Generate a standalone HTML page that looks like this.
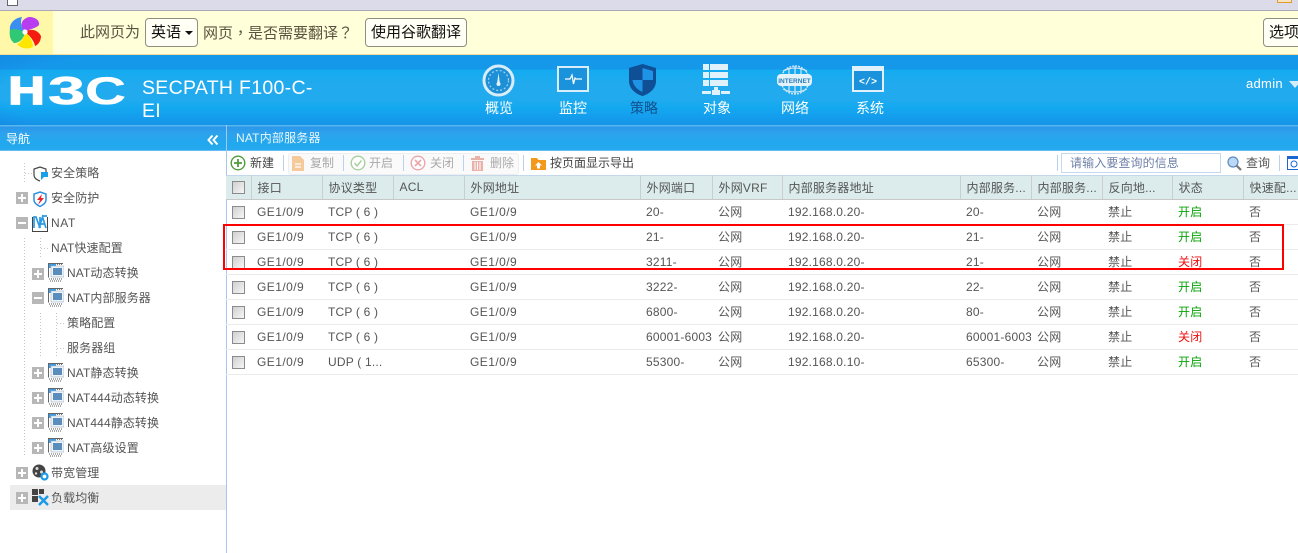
<!DOCTYPE html>
<html lang="zh">
<head>
<meta charset="utf-8">
<title>NAT内部服务器</title>
<style>
html,body{margin:0;padding:0;background:#fff}
body{width:1298px;height:553px;position:relative;overflow:hidden;font-family:"Liberation Sans","Noto Sans CJK SC",sans-serif;font-size:12px;color:#555}
.a{position:absolute;white-space:nowrap}
svg{position:absolute;display:block;overflow:visible}
.btn{position:absolute;top:18px;height:27px;border:1px solid #8f8f80;border-radius:4px;background:#fffff5;color:#111;font-size:15px;line-height:27px;text-align:center;white-space:nowrap;box-sizing:content-box}
.nav{position:absolute;top:98px;width:60px;text-align:center;color:#fff;font-size:14px;line-height:20px}
.t{position:absolute;white-space:nowrap;line-height:20px;color:#555;font-size:12px;letter-spacing:.1px}
.pm{position:absolute;width:12px;height:12px;background:#b7b7b7}
.pm:before{content:"";position:absolute;left:2px;top:5px;width:8px;height:2px;background:#fff}
.pm.p:after{content:"";position:absolute;left:5px;top:2px;width:2px;height:8px;background:#fff}
.dv{position:absolute;width:1px;background:repeating-linear-gradient(#c4c4c4 0 1px,transparent 1px 3px)}
.dh{position:absolute;height:1px;width:8px;background:repeating-linear-gradient(90deg,#c4c4c4 0 1px,transparent 1px 3px)}
table{position:absolute;left:226px;top:175px;width:1072px;border-collapse:collapse;table-layout:fixed;font-size:12px;letter-spacing:.2px}
th{height:24px;padding:0 0 1px 6px;background:#dcecec;border-top:1px solid #c3d8ea;border-bottom:1px solid #c8c8c8;border-right:1px solid #c9cfcf;font-weight:normal;text-align:left;color:#555;overflow:hidden;white-space:nowrap;box-sizing:border-box}
td{height:25px;padding:0 0 0 6px;border-bottom:1px solid #ebebeb;overflow:hidden;white-space:nowrap;color:#555;box-sizing:border-box}
td:nth-child(2),td:nth-child(5){letter-spacing:.45px}
td:nth-child(7),td:nth-child(10),td:nth-child(11),td:nth-child(12),td:nth-child(13){padding-bottom:2px}
th:first-child,td:first-child{padding:0}
th:last-child{border-right:0}
.cb{display:block;width:11px;height:11px;margin-left:6px;border:1px solid #8b8b8b;background:linear-gradient(135deg,#d0d0d0,#f6f6f6)}
.g{color:#0aa50a}.r{color:#f01010}
.bar{position:absolute;top:155px;width:1px;height:16px;background:#b9d3ee}
.dis{color:#aaa}
</style>
</head>
<body>
<!-- browser top -->
<div class="a" style="left:0;top:0;width:1298px;height:10px;background:#dcdbea;border-bottom:1px solid #a9a8b6"></div>
<div class="a" style="left:7px;top:-5px;width:9px;height:9px;border:1px solid #666;background:#fff"></div>
<div class="a" style="left:1277px;top:-4px;width:13px;height:5px;border:1px solid #e09a30;background:#f7e4c0"></div>
<!-- infobar -->
<div class="a" style="left:0;top:11px;width:1298px;height:43px;background:#ffffda;border-bottom:1px solid #f2dc9a"></div>
<div class="a" style="left:0;top:11px;width:53px;height:43px;background:#fff8a8"></div>
<svg style="left:9px;top:16px" width="33" height="33" viewBox="0 0 33 33">
<path d="M16 16C10 10 12 3 20 1C27 1 31 5 30 9C26 13 20 13 16 16Z" fill="#b83df0"/>
<path d="M16 16C22 12 29 14 32 20C32 25 29 29 26 30C25 24 20 19 16 16Z" fill="#f41c10"/>
<path d="M16 16C21 20 24 26 24 31C18 34 11 32 8 28C12 27 15 22 16 16Z" fill="#ffe600"/>
<path d="M16 16C15 22 11 27 5 27C1 24 0 19 1 13C6 11 12 13 16 16Z" fill="#2fc874"/>
<path d="M16 16C11 14 6 12 1 14C0 8 5 2 13 1C11 6 12 12 16 16Z" fill="#3b8ff0"/>
<circle cx="16" cy="16" r="2.6" fill="#fff"/>
</svg>
<div class="a" style="left:80px;top:22px;font-size:15px;line-height:22px;color:#5a5340">此网页为</div>
<div class="btn" style="left:145px;width:51px;text-align:left;text-indent:5px">英语<span class="a" style="left:39px;top:12px;width:0;height:0;border:4px solid transparent;border-top:4px solid #111;text-indent:0"></span></div>
<div class="a" lang="zh-TW" style="left:203px;top:22px;font-size:15px;line-height:22px;color:#5a5340;font-family:'Noto Sans CJK TC',sans-serif">网页，是否需要翻译？</div>
<div class="btn" style="left:365px;width:100px">使用谷歌翻译</div>
<div class="btn" style="left:1263px;width:60px;text-align:left;text-indent:5px">选项</div>
<!-- header -->
<div class="a" style="left:0;top:55px;width:1298px;height:70px;background:linear-gradient(#1597ea 0,#1597ea 14px,#13abf0 15px,#1cabef 24px,#22aaee 30px,#22aaee 44px,#13a9f0 52px,#14a0ee 60px,#1594e8 70px)"></div>
<div class="a" style="left:0;top:55px;width:130px;height:70px;background:radial-gradient(ellipse at 100% 55%,rgba(30,170,240,0) 70%,rgba(20,130,225,.55) 100%)"></div>
<svg style="left:8px;top:76px" width="118" height="29" viewBox="0 0 118 29">
<g font-family="Liberation Sans" font-weight="700" font-size="39" fill="#fff" stroke="#fff">
<text x=".5" y="28" textLength="36" lengthAdjust="spacingAndGlyphs" stroke-width="1.800">H</text>
<text x="40" y="28" textLength="37" lengthAdjust="spacingAndGlyphs" stroke-width=".6">3</text>
<text x="77" y="28" textLength="41" lengthAdjust="spacingAndGlyphs" stroke-width=".3">C</text>
</g>
</svg>
<div class="a" style="left:142px;top:77px;width:172px;font-size:19.500px;line-height:23px;color:#fff;letter-spacing:.3px">SECPATH F100-C-<br>EI</div>
<!-- nav icons -->
<svg style="left:482px;top:64px" width="33" height="33" viewBox="0 0 33 33">
<circle cx="16.500" cy="16.500" r="14.500" fill="#1c8fd6" stroke="#d8edf8" stroke-width="3"/>
<circle cx="16.500" cy="16.500" r="10" fill="none" stroke="#9fd3ee" stroke-width="1.200" stroke-dasharray="2 2"/>
<path d="M16.500 9L18 20H15Z" fill="#e4f3fb"/><circle cx="16.500" cy="20" r="2" fill="#e4f3fb"/>
</svg>
<svg style="left:557px;top:66px" width="33" height="27" viewBox="0 0 33 27">
<rect x="1" y="1" width="30" height="24" fill="#1b93dc" stroke="#d9eefa" stroke-width="2"/>
<path d="M8 13H13L15 9L16.500 18L18 12L19 13H25" fill="none" stroke="#fff" stroke-width="1.200"/>
</svg>
<svg style="left:628px;top:64px" width="29" height="33" viewBox="0 0 29 33">
<path d="M14.500 0L28 4V17C28 25 21 30 14.500 32C8 30 1 25 1 17V4Z" fill="#0e4f96"/>
<path d="M14.500 4L25 7V16H14.500Z" fill="#1f94e6"/><path d="M14.500 16H4.500C5 22 10 26 14.500 28Z" fill="#1f94e6"/>
</svg>
<svg style="left:702px;top:64px" width="29" height="32" viewBox="0 0 29 32">
<g fill="#dff1fb"><rect x="1" y="0" width="6" height="6"/><rect x="8" y="0" width="18" height="6"/><rect x="1" y="8" width="6" height="6"/><rect x="8" y="8" width="18" height="6"/><rect x="1" y="16" width="6" height="6"/><rect x="8" y="16" width="18" height="6"/><rect x="12" y="23" width="4" height="4"/><rect x="0" y="27" width="9" height="3"/><rect x="10" y="26" width="8" height="5"/><rect x="19" y="27" width="9" height="3"/></g>
</svg>
<svg style="left:777px;top:65px" width="36" height="30" viewBox="0 0 36 30">
<circle cx="18" cy="15" r="14" fill="none" stroke="#cfe9f7" stroke-width="1.400" stroke-dasharray="2 1"/>
<path d="M6 6Q18 0 30 6M6 24Q18 30 30 24M12 3V27M18 1V29M24 3V27" fill="none" stroke="#cfe9f7" stroke-width="1.200"/>
<rect x="0" y="9" width="35" height="12" rx="4" fill="#e4f2fa"/>
<text x="17.500" y="18" text-anchor="middle" font-family="Liberation Sans" font-size="6.500" fill="#2a7fb8" font-weight="700">INTERNET</text>
</svg>
<svg style="left:852px;top:66px" width="33" height="27" viewBox="0 0 33 27">
<rect x="1" y="1" width="30" height="24" fill="#1b93dc" stroke="#e1f1fb" stroke-width="2"/>
<rect x="1" y="1" width="30" height="4" fill="#e1f1fb"/>
<text x="16" y="18.500" text-anchor="middle" font-family="Liberation Mono" font-size="10" font-weight="700" fill="#fff">&lt;/&gt;</text>
</svg>
<div class="nav" style="left:469px">概览</div>
<div class="nav" style="left:543px">监控</div>
<div class="nav" style="left:614px;color:#14508f">策略</div>
<div class="nav" style="left:687px">对象</div>
<div class="nav" style="left:765px">网络</div>
<div class="nav" style="left:840px">系统</div>
<div class="a" style="left:1246px;top:76px;color:#fff;font-size:13px;line-height:16px;letter-spacing:.3px">admin</div>
<div class="a" style="left:1289px;top:81px;width:0;height:0;border:6px solid transparent;border-top:7px solid #d6edf9"></div>
<!-- band -->
<div class="a" style="left:0;top:125px;width:1298px;height:26px;background:linear-gradient(#58b6ee 0,#58b6ee 1px,#2b96ea 2px,#2ea2ec 8px,#21a8ee 18px,#25a9ef 25px,#a9cdf0 26px)"></div>
<div class="a" style="left:226px;top:125px;width:1px;height:428px;background:#a5c8ee"></div>
<div class="a" style="left:6px;top:129px;color:#fff;font-size:12px;line-height:20px">导航</div>
<svg style="left:207px;top:134px" width="12" height="12" viewBox="0 0 12 12"><path d="M5.500 1.500L1.500 6L5.500 10.500M10.500 1.500L6.500 6L10.500 10.500" fill="none" stroke="#fff" stroke-width="2"/></svg>
<div class="a" style="left:236px;top:128px;color:#e9f6fd;font-size:12px;line-height:20px;letter-spacing:.2px">NAT内部服务器</div>
<!-- toolbar -->
<svg style="left:230px;top:155px" width="16" height="16" viewBox="0 0 16 16"><circle cx="8" cy="8" r="6.800" fill="#fff" stroke="#4e9d3a" stroke-width="1.400"/><path d="M8 4V12M4 8H12" stroke="#4e9d3a" stroke-width="1.800"/></svg>
<div class="a" style="left:250px;top:153px;line-height:20px;color:#444">新建</div>
<div class="bar" style="left:283px"></div>
<div class="a" style="left:288px;top:153px;width:229px;height:20px;background:#fafafa;border:1px solid #eee;border-radius:3px"></div>
<svg style="left:291px;top:156px" width="14" height="15" viewBox="0 0 14 15"><path d="M1 0H9L13 4V15H1Z" fill="#f6c99b"/><path d="M4 8H10M4 11H10" stroke="#fff" stroke-width="1.200"/></svg>
<div class="a dis" style="left:310px;top:153px;line-height:20px">复制</div>
<div class="bar" style="left:343px"></div>
<svg style="left:350px;top:155px" width="16" height="16" viewBox="0 0 16 16"><circle cx="8" cy="8" r="6.800" fill="#fff" stroke="#a9cfa0" stroke-width="1.400"/><path d="M4.500 8L7 11L11.500 5.500" fill="none" stroke="#a9cfa0" stroke-width="1.500"/></svg>
<div class="a dis" style="left:369px;top:153px;line-height:20px">开启</div>
<div class="bar" style="left:403px"></div>
<svg style="left:410px;top:155px" width="16" height="16" viewBox="0 0 16 16"><circle cx="8" cy="8" r="6.800" fill="#fff" stroke="#eda5ab" stroke-width="1.400"/><path d="M5 5L11 11M11 5L5 11" stroke="#eda5ab" stroke-width="1.600"/></svg>
<div class="a dis" style="left:430px;top:153px;line-height:20px">关闭</div>
<div class="bar" style="left:463px"></div>
<svg style="left:471px;top:156px" width="13" height="15" viewBox="0 0 13 15"><path d="M0 2H13V4H0ZM4 0H9V2H4ZM1 5H12V15H1Z" fill="#e9b1a8"/><path d="M4 6V14M6.500 6V14M9 6V14" stroke="#fff"/></svg>
<div class="a dis" style="left:490px;top:153px;line-height:20px">删除</div>
<div class="bar" style="left:523px"></div>
<svg style="left:531px;top:157px" width="15" height="13" viewBox="0 0 15 13"><path d="M0 1H6L7.500 3H15V13H0Z" fill="#f39a1c"/><path d="M7.500 5L11 8.500H9V11.500H6V8.500H4Z" fill="#fff"/></svg>
<div class="a" style="left:550px;top:153px;line-height:20px;color:#444">按页面显示导出</div>
<div class="bar" style="left:1057px"></div>
<div class="a" style="left:1061px;top:153px;width:158px;height:18px;border:1px solid #c4d8ef;line-height:19px;color:#6f80a8;text-indent:8px;letter-spacing:.1px">请输入要查询的信息</div>
<svg style="left:1227px;top:156px" width="15" height="15" viewBox="0 0 15 15"><circle cx="6" cy="6" r="5" fill="#bcd8f4" stroke="#5b8cc4" stroke-width="1.200"/><path d="M9.500 9.500L14 14" stroke="#777" stroke-width="2.200"/></svg>
<div class="a" style="left:1246px;top:153px;line-height:20px">查询</div>
<div class="bar" style="left:1279px"></div>
<svg style="left:1287px;top:156px" width="14" height="14" viewBox="0 0 14 14"><rect x=".5" y=".5" width="13" height="13" fill="#fff" stroke="#1c66d0"/><rect x="0" y="0" width="14" height="3" fill="#1c66d0"/><circle cx="7" cy="8" r="3" fill="none" stroke="#1c66d0"/></svg>
<!-- table -->
<table>
<colgroup><col style="width:25px"><col style="width:71px"><col style="width:71px"><col style="width:71px"><col style="width:176px"><col style="width:72px"><col style="width:70px"><col style="width:178px"><col style="width:71px"><col style="width:71px"><col style="width:70px"><col style="width:71px"><col></colgroup>
<tr><th><span class="cb"></span></th><th>接口</th><th>协议类型</th><th>ACL</th><th>外网地址</th><th>外网端口</th><th>外网VRF</th><th>内部服务器地址</th><th>内部服务...</th><th>内部服务...</th><th>反向地...</th><th>状态</th><th>快速配...</th></tr>
<tr><td><span class="cb"></span></td><td>GE1/0/9</td><td>TCP ( 6 )</td><td></td><td>GE1/0/9</td><td>20-</td><td>公网</td><td>192.168.0.20-</td><td>20-</td><td>公网</td><td>禁止</td><td class="g">开启</td><td>否</td></tr>
<tr><td><span class="cb"></span></td><td>GE1/0/9</td><td>TCP ( 6 )</td><td></td><td>GE1/0/9</td><td>21-</td><td>公网</td><td>192.168.0.20-</td><td>21-</td><td>公网</td><td>禁止</td><td class="g">开启</td><td>否</td></tr>
<tr><td><span class="cb"></span></td><td>GE1/0/9</td><td>TCP ( 6 )</td><td></td><td>GE1/0/9</td><td>3211-</td><td>公网</td><td>192.168.0.20-</td><td>21-</td><td>公网</td><td>禁止</td><td class="r">关闭</td><td>否</td></tr>
<tr><td><span class="cb"></span></td><td>GE1/0/9</td><td>TCP ( 6 )</td><td></td><td>GE1/0/9</td><td>3222-</td><td>公网</td><td>192.168.0.20-</td><td>22-</td><td>公网</td><td>禁止</td><td class="g">开启</td><td>否</td></tr>
<tr><td><span class="cb"></span></td><td>GE1/0/9</td><td>TCP ( 6 )</td><td></td><td>GE1/0/9</td><td>6800-</td><td>公网</td><td>192.168.0.20-</td><td>80-</td><td>公网</td><td>禁止</td><td class="g">开启</td><td>否</td></tr>
<tr><td><span class="cb"></span></td><td>GE1/0/9</td><td>TCP ( 6 )</td><td></td><td>GE1/0/9</td><td>60001-60030</td><td>公网</td><td>192.168.0.20-</td><td>60001-60030</td><td>公网</td><td>禁止</td><td class="r">关闭</td><td>否</td></tr>
<tr><td><span class="cb"></span></td><td>GE1/0/9</td><td>UDP ( 1...</td><td></td><td>GE1/0/9</td><td>55300-</td><td>公网</td><td>192.168.0.10-</td><td>65300-</td><td>公网</td><td>禁止</td><td class="g">开启</td><td>否</td></tr>
</table>
<div class="a" style="left:223px;top:224px;width:1057px;height:42px;border:2px solid #f00"></div>
<!-- tree -->
<div class="a" style="left:10px;top:485px;width:216px;height:25px;background:#ececec"></div>
<div class="dv" style="left:24px;top:163px;height:20px"></div><div class="dh" style="left:25px;top:173px"></div>
<div class="dv" style="left:24px;top:238px;height:219px"></div>
<div class="dv" style="left:40px;top:238px;height:20px"></div><div class="dh" style="left:41px;top:248px"></div>
<div class="dv" style="left:40px;top:313px;height:45px"></div>
<div class="dv" style="left:56px;top:313px;height:45px"></div><div class="dh" style="left:57px;top:323px"></div><div class="dh" style="left:57px;top:348px"></div>
<div class="pm p" style="left:16px;top:192px"></div>
<div class="pm" style="left:16px;top:217px"></div>
<div class="pm p" style="left:32px;top:268px"></div>
<div class="pm" style="left:32px;top:292px"></div>
<div class="pm p" style="left:32px;top:367px"></div>
<div class="pm p" style="left:32px;top:392px"></div>
<div class="pm p" style="left:32px;top:417px"></div>
<div class="pm p" style="left:32px;top:442px"></div>
<div class="pm p" style="left:16px;top:467px"></div>
<div class="pm p" style="left:16px;top:492px"></div>
<svg style="left:33px;top:166px" width="16" height="16" viewBox="0 0 16 16"><path d="M7 1L13 3V6M7 1L1 3V9C1 12 4 14 7 15" fill="none" stroke="#444" stroke-width="1.200"/><path d="M8 6H15V11H11L8 14Z" fill="#1aa0e8"/></svg>
<svg style="left:33px;top:191px" width="15" height="16" viewBox="0 0 15 16"><path d="M7 1L13 3V9C13 12 10 14 7 15.500C4 14 1 12 1 9V3Z" fill="#fff" stroke="#2a8fe0" stroke-width="1.500"/><path d="M9 3L4 9H7L5 14L11 7H8Z" fill="#e8242c"/></svg>
<svg style="left:32px;top:214px" width="16" height="18" viewBox="0 0 16 18"><path d="M.5 3V17.500H15.500V3" fill="#fff" stroke="#444"/><path d="M2 14V3H4L8 14V3M7 14L10.500 3L14 14M9 10H13M10 2H15" fill="none" stroke="#2a9ae4" stroke-width="1.700"/></svg>
<svg width="0" height="0" style="left:0;top:0"><symbol id="srv" viewBox="0 0 16 19"><path d="M.5 14.500V.5H15" fill="#fff" stroke="#666"/><rect x="1" y="1" width="7" height="4" fill="#3f9ae4"/><path d="M9 1.500H15" stroke="#777" stroke-dasharray="1 1"/><rect x="3" y="3" width="13" height="11" fill="#eef3f8" stroke="#9fb3c6" stroke-width=".6"/><rect x="5" y="5" width="9" height="7" fill="#5a8dbb"/><path d="M1 16H15M2 18H14" stroke="#555" stroke-dasharray="1 1"/></symbol></svg>
<svg style="left:48px;top:263px" width="16" height="19"><use href="#srv"/></svg>
<svg style="left:48px;top:288px" width="16" height="19"><use href="#srv"/></svg>
<svg style="left:48px;top:363px" width="16" height="19"><use href="#srv"/></svg>
<svg style="left:48px;top:388px" width="16" height="19"><use href="#srv"/></svg>
<svg style="left:48px;top:413px" width="16" height="19"><use href="#srv"/></svg>
<svg style="left:48px;top:438px" width="16" height="19"><use href="#srv"/></svg>
<svg style="left:32px;top:464px" width="17" height="17" viewBox="0 0 17 17"><circle cx="7" cy="7" r="6.500" fill="#444"/><circle cx="5" cy="4.500" r="1.500" fill="#ddd"/><circle cx="9.500" cy="8" r="1.500" fill="#ddd"/><circle cx="4" cy="9.500" r="1.200" fill="#ddd"/><circle cx="12.500" cy="12.500" r="3" fill="#fff" stroke="#1a9ae8" stroke-width="2.200"/></svg>
<svg style="left:32px;top:489px" width="17" height="17" viewBox="0 0 17 17"><rect x="0" y="0" width="6" height="6" fill="#444"/><rect x="7" y="0" width="5" height="5" fill="#444"/><rect x="0" y="7" width="6" height="6" fill="#444"/><path d="M7 7L16 16M16 7L7 16" stroke="#1a9ae8" stroke-width="2.400"/></svg>
<div class="t" style="left:51px;top:163px">安全策略</div>
<div class="t" style="left:51px;top:188px">安全防护</div>
<div class="t" style="left:51px;top:213px;letter-spacing:.6px">NAT</div>
<div class="t" style="left:51px;top:238px">NAT快速配置</div>
<div class="t" style="left:67px;top:263px">NAT动态转换</div>
<div class="t" style="left:67px;top:288px">NAT内部服务器</div>
<div class="t" style="left:67px;top:313px">策略配置</div>
<div class="t" style="left:67px;top:338px">服务器组</div>
<div class="t" style="left:67px;top:363px">NAT静态转换</div>
<div class="t" style="left:67px;top:388px">NAT444动态转换</div>
<div class="t" style="left:67px;top:413px">NAT444静态转换</div>
<div class="t" style="left:67px;top:438px">NAT高级设置</div>
<div class="t" style="left:51px;top:463px">带宽管理</div>
<div class="t" style="left:51px;top:488px">负载均衡</div>
</body>
</html>
